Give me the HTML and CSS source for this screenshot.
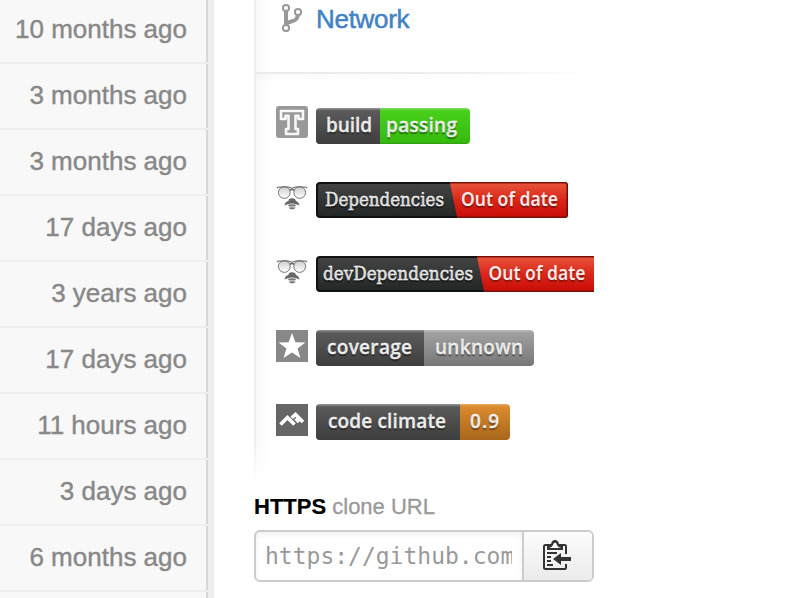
FILE: index.html
```html
<!DOCTYPE html>
<html lang="en">
<head>
<meta charset="utf-8">
<title>Repository</title>
<link rel="stylesheet" href="styles.css">
</head>
<body>
<svg class="defs" width="0" height="0" aria-hidden="true">
  <defs>
    <linearGradient id="dark" x2="0" y2="1"><stop offset="0" stop-color="#999"/><stop offset=".08" stop-color="#5a5a5a"/><stop offset="1" stop-color="#3e3e3e"/></linearGradient>
    <linearGradient id="green" x2="0" y2="1"><stop offset="0" stop-color="#85dc6a"/><stop offset=".08" stop-color="#47d01b"/><stop offset=".94" stop-color="#36bb0e"/><stop offset="1" stop-color="#319b13"/></linearGradient>
    <linearGradient id="gray" x2="0" y2="1"><stop offset="0" stop-color="#bbb"/><stop offset=".08" stop-color="#a0a0a0"/><stop offset="1" stop-color="#777"/></linearGradient>
    <linearGradient id="orange" x2="0" y2="1"><stop offset="0" stop-color="#e5ac64"/><stop offset=".08" stop-color="#db8a2d"/><stop offset="1" stop-color="#a8661c"/></linearGradient>
    <linearGradient id="black" x2="0" y2="1"><stop offset="0" stop-color="#444"/><stop offset="1" stop-color="#222625"/></linearGradient>
    <linearGradient id="red" x2="0" y2="1"><stop offset="0" stop-color="#e8543a"/><stop offset=".5" stop-color="#da2619"/><stop offset="1" stop-color="#c90d08"/></linearGradient>
    <linearGradient id="lens" x2="0" y2="1"><stop offset="0" stop-color="#ccc"/><stop offset="1" stop-color="#fff"/></linearGradient>
    <symbol id="face" viewBox="0 0 32 32">
      <g fill="url(#lens)" stroke="#777" stroke-width="1"><circle cx="8.3" cy="10.500" r="5.900"/><circle cx="23.7" cy="10.500" r="5.900"/></g>
      <path d="M.8 6l2-1h9.500l3.700 1.200L19.700 5h9.500l2 1M13.800 8.500q2.200-2 4.400 0" fill="none" stroke="#666" stroke-width="1.200"/>
      <path d="M13 17q3-1.500 6 0l1 2q3 1 3.500 4.500-4-2-7.500-2T8.500 23.500q.5-4 4-4.500z" fill="#666"/>
      <path d="M11.500 22.800q4.500-1 9 0l-1.800 1.800h-5.400zM12.500 25.600q3.500-.6 7.500 0-4 4-7.500 0z" fill="#777"/>
    </symbol>
  </defs>
</svg>
<main class="page">
  <ul class="ages">
    <li>10 months ago</li>
    <li>3 months ago</li>
    <li>3 months ago</li>
    <li>17 days ago</li>
    <li>3 years ago</li>
    <li>17 days ago</li>
    <li>11 hours ago</li>
    <li>3 days ago</li>
    <li>6 months ago</li>
    <li></li>
  </ul>
  <aside class="sidebar">
    <div class="nav">
      <div class="network">
        <svg class="branch" width="22" height="32" viewBox="0 0 22 32" fill="none" stroke="#999">
          <path d="M6 10v15M18 13.500c0 6-3 7-6 7.700s-5 1.300-6 3" stroke-width="4"/>
          <g fill="#fff" stroke-width="2"><circle cx="6" cy="8" r="3.100"/><circle cx="18" cy="12" r="3.100"/><circle cx="6" cy="28" r="3.100"/></g>
        </svg>
        <a>Network</a>
      </div>
      <div class="badges">
        <div class="row">
          <svg class="icon raised" width="32" height="32" viewBox="0 0 32 32">
            <rect width="32" height="32" rx="3" fill="#999"/>
            <path d="M5 5h22v8h-4.500V9.700h-3V23H22v5H10v-5h2.500V9.700h-3V13H5z" fill="#999" stroke="#f8f8f8" stroke-width="2.600" stroke-linejoin="round"/>
          </svg>
          <svg class="badge shaded" width="154" height="36">
            <rect width="154" height="36" rx="4" fill="url(#green)"/>
            <path d="M64 0H4Q0 0 0 4v28q0 4 4 4h60z" fill="url(#dark)"/>
            <text x="10" y="24" textLength="46">build</text>
            <text x="70" y="24" textLength="71">passing</text>
          </svg>
        </div>
        <div class="row">
          <svg class="icon" width="32" height="32"><use href="#face"/></svg>
          <svg class="badge" width="252" height="36">
            <rect x="1" y="1" width="250" height="34" rx="3" fill="url(#black)" stroke="#111" stroke-width="2"/>
            <path d="M134 1h115q2 0 2 2v30q0 2-2 2H141z" fill="url(#red)"/>
            <path d="M134 .8h115q2.200 0 2.200 2.200v30q0 2.200-2.200 2.200H141" fill="none" stroke="#7a1008" stroke-width="1.500"/>
            <text class="slab" x="9" y="24" textLength="119" lengthAdjust="spacingAndGlyphs">Dependencies</text>
            <text class="date" x="145" y="24" textLength="97" lengthAdjust="spacingAndGlyphs">Out of date</text>
          </svg>
        </div>
        <div class="row">
          <svg class="icon" width="32" height="32"><use href="#face"/></svg>
          <svg class="badge" width="278" height="36">
            <path d="M278 1H4Q1 1 1 4v28q0 3 3 3h274" fill="url(#black)" stroke="#111" stroke-width="2"/>
            <path d="M161 1h117v34H168z" fill="url(#red)"/>
            <path d="M161 .8h117M168 35.200h110" stroke="#7a1008" stroke-width="1.500"/>
            <text class="slab" x="7" y="24" textLength="150" lengthAdjust="spacingAndGlyphs">devDependencies</text>
            <text class="date" x="172.500" y="24" textLength="97" lengthAdjust="spacingAndGlyphs">Out of date</text>
          </svg>
        </div>
        <div class="row">
          <svg class="icon" width="32" height="32" viewBox="0 0 32 32">
            <rect width="32" height="32" fill="#888"/>
            <path d="M16 3l3.400 9.200 9.900.3-7.700 6 2.800 9.500-8.400-5.600L7.600 28l2.800-9.500-7.700-6 9.900-.3z" fill="#fff"/>
          </svg>
          <svg class="badge shaded" width="218" height="36">
            <rect width="218" height="36" rx="4" fill="url(#gray)"/>
            <path d="M108 0H4Q0 0 0 4v28q0 4 4 4h104z" fill="url(#dark)"/>
            <text x="11" y="24" textLength="85">coverage</text>
            <text x="119" y="24" textLength="88">unknown</text>
          </svg>
        </div>
        <div class="row">
          <svg class="icon" width="32" height="32" viewBox="0 0 32 32">
            <rect width="32" height="32" fill="#666"/>
            <path d="M4.500 20.500l7-7 7 7M15.500 14l4-3.500 7.500 7.500M19.500 14.500l3.500 3.500" fill="none" stroke="#fff" stroke-width="3.600"/>
            <path d="M13.500 12l8.500 8.500" stroke="#666" stroke-width=".8"/>
          </svg>
          <svg class="badge shaded" width="194" height="36">
            <rect width="194" height="36" rx="4" fill="url(#orange)"/>
            <path d="M144 0H4Q0 0 0 4v28q0 4 4 4h140z" fill="url(#dark)"/>
            <text x="12" y="24" textLength="118">code climate</text>
            <text x="154" y="24" textLength="29">0.9</text>
          </svg>
        </div>
      </div>
    </div>
    <div class="clone-label"><strong>HTTPS</strong> clone URL</div>
    <div class="clone">
      <div class="url"><span>https://github.com</span></div>
      <div class="copy">
        <svg width="28" height="32" viewBox="0 0 28 32">
          <path d="M23 14V6.500q0-1.500-1.500-1.500H2.500Q1 5 1 6.500v21Q1 29 2.500 29h19q1.500 0 1.500-1.500V24" fill="none" stroke="#333" stroke-width="2"/>
          <path d="M4 10V6q3 0 4-1.500Q8.500 0 12 0t4 4.500Q17 6 20 6v4z" fill="#333"/>
          <path d="M6 8q3-.5 4-3 .5-2.500 2-2.500t2 2.500q1 2.500 4 3z" fill="#f8f8f8"/>
          <path d="M4 13h10M4 17h4M4 21h4M4 25h6" stroke="#333" stroke-width="2"/>
          <path d="M10 19l8-6v4h10v4H18v4z" fill="#333"/>
        </svg>
      </div>
    </div>
  </aside>
</main>
</body>
</html>
```
FILE: styles.css
```css
* { box-sizing: border-box; }
body { margin: 0; background: #fff; font-family: "Liberation Sans", Arial, sans-serif; overflow: hidden; }
.defs { display: block; }
.page { display: flex; height: 598px; overflow: hidden; }
.ages { width: 214px; height: 660px; margin: 0; padding: 0 6px 0 0; list-style: none; background: #eee; }
.ages li {
  height: 66px; padding: 0 21px 0 0; text-align: right; white-space: nowrap;
  font-size: 26px; line-height: 62px; letter-spacing: 0; color: #888;
  -webkit-text-stroke: .4px #888;
  background: linear-gradient(#d8d8d8, #d8d8d8) right / 2px 100% no-repeat #f8f8f8;
  border-bottom: 2px solid #eee; background-clip: padding-box;
}
.ages li:first-child { height: 64px; line-height: 58px; }
.sidebar { width: 340px; margin-left: 40px; }
.nav {
  height: 484px;
  background: linear-gradient(transparent 440px, #fff 480px), linear-gradient(#eee, #eee) left / 2px 100% no-repeat, linear-gradient(90deg, #f8f8f8 2px, #fff 16px);
}
.network { display: flex; height: 72px; padding-left: 26px; }
.branch { margin-right: 14px; }
.network a { font-size: 26px; line-height: 30px; margin-top: 4px; letter-spacing: -.3px; color: #4183c4; -webkit-text-stroke: .5px #4183c4; }
.badges {
  margin-left: 2px; padding: 36px 0 0 20px;
  background: linear-gradient(90deg, #ebebeb, #eee 60%, transparent 98%) top / 100% 2px no-repeat, linear-gradient(90deg, transparent, #fff 80%) 0 2px / 100% 9px no-repeat, linear-gradient(rgba(0,0,0,.018), transparent) 0 2px / 100% 9px no-repeat;
}
.row { display: flex; height: 74px; align-items: flex-start; gap: 8px; }
.icon { flex: none; }
.raised { margin-top: -2px; }
.badge { flex: none; overflow: visible; font: 600 19px "Open Sans", sans-serif; fill: #f5f5f5; }
.badge text { text-shadow: 0 2px 1px rgba(0,0,0,.35); }
.shaded text { stroke: #f5f5f5; stroke-width: .3px; }
.badge .slab { font: 400 18.5px "DejaVu Serif", serif; fill: #eee; stroke: #eee; stroke-width: .5px; }
.badge .date { font: 600 19px "Noto Sans", sans-serif; fill: #f6e9e6; }
.clone-label { padding-top: 10px; height: 46px; font-size: 22px; line-height: 25px; color: #999; -webkit-text-stroke: .3px #999; }
.clone-label strong { color: #000; -webkit-text-stroke: .2px #000; }
.clone { display: flex; height: 52px; border: 2px solid #ccc; border-radius: 6px; overflow: hidden; }
.url { width: 266px; padding: 0 10px 0 9px; box-shadow: inset 0 3px 5px rgba(0,0,0,.06); }
.url span { display: block; overflow: hidden; height: 48px; font: 23px/48px "DejaVu Sans Mono", monospace; color: #999; white-space: nowrap; }
.copy { flex: 1; border-left: 2px solid #ccc; padding: 8px 0 0 19px; background: linear-gradient(#fcfcfc, #ebebeb); }
```
